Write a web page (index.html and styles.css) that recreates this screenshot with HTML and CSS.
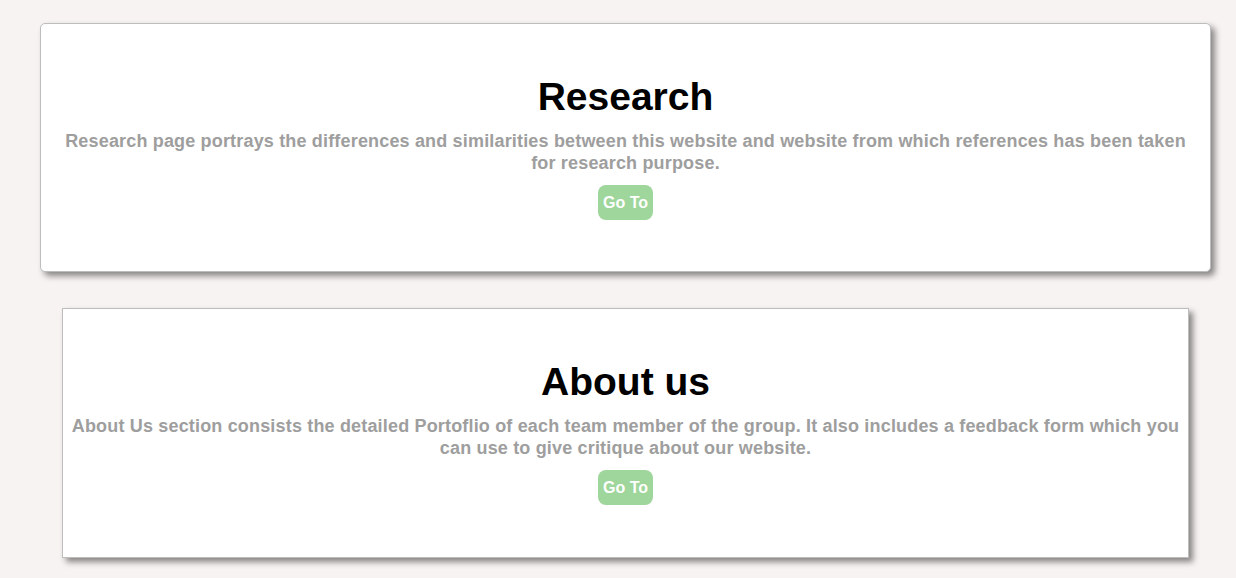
FILE: index.html
```html
<!DOCTYPE html>
<html>
<head>
<meta charset="utf-8">
<link rel="stylesheet" href="styles.css">
</head>
<body>
<div class="page">
  <section class="card card-research">
    <h1 class="card-title">Research</h1>
    <p class="card-text">Research page portrays the differences and similarities between this website and website from which references has been taken for research purpose.</p>
    <a class="btn" href="#">Go To</a>
  </section>
  <section class="card card-about">
    <h1 class="card-title">About us</h1>
    <p class="card-text">About Us section consists the detailed Portoflio of each team member of the group. It also includes a feedback form which you can use to give critique about our website.</p>
    <a class="btn" href="#">Go To</a>
  </section>
</div>
</body>
</html>
```
FILE: styles.css
```css
html, body {
  margin: 0;
  padding: 0;
  background: #f7f3f2;
  font-family: "Liberation Sans", Arial, sans-serif;
}
.page {
  display: flex;
  flex-direction: column;
  padding: 23px 0 30px;
  gap: 36px;
}
.card {
  box-sizing: border-box;
  height: 250px;
  background: #fff;
  border: 1px solid #bdbdbd;
  box-shadow: 4px 4px 6px rgba(0,0,0,0.45);
  display: flex;
  flex-direction: column;
  align-items: center;
  justify-content: center;
  text-align: center;
  padding: 2px 4px 4px;
}
.card-research {
  margin-left: 40px;
  width: 1171px;
  border-radius: 5px;
  height: 249px;
  padding-left: 20px;
  padding-right: 20px;
}
.card-about {
  margin-left: 62px;
  width: 1127px;
}
.card-title {
  margin: 0;
  font-size: 39px;
  line-height: 46px;
  font-weight: bold;
  color: #000;
}
.card-text {
  margin: 10px 0 11px;
  font-size: 18px;
  line-height: 22px;
  font-weight: bold;
  letter-spacing: 0.17px;
  color: #9e9e9e;
}
.btn {
  display: inline-block;
  background: #9ed69b;
  color: #fff;
  font-size: 16px;
  font-weight: bold;
  line-height: 19px;
  padding: 8px 5px;
  border-radius: 8px;
  text-decoration: none;
}
```
